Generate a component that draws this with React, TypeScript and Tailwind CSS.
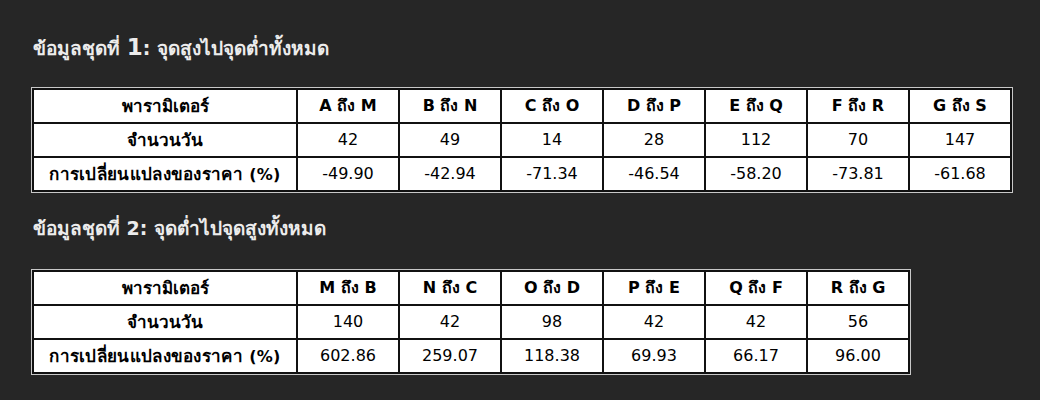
const font = { fontFamily: '"DejaVu Sans", "Noto Sans", sans-serif' };

type TableData = {
  headers: string[];
  days: string[];
  changes: string[];
};

const set1: TableData = {
  headers: ["A ถึง M", "B ถึง N", "C ถึง O", "D ถึง P", "E ถึง Q", "F ถึง R", "G ถึง S"],
  days: ["42", "49", "14", "28", "112", "70", "147"],
  changes: ["-49.90", "-42.94", "-71.34", "-46.54", "-58.20", "-73.81", "-61.68"],
};

const set2: TableData = {
  headers: ["M ถึง B", "N ถึง C", "O ถึง D", "P ถึง E", "Q ถึง F", "R ถึง G"],
  days: ["140", "42", "98", "42", "42", "56"],
  changes: ["602.86", "259.07", "118.38", "69.93", "66.17", "96.00"],
};

function DataTable({ data }: { data: TableData }) {
  const cell = "border-2 border-[#111] h-[34px] p-0 text-center align-middle leading-[20px]";
  return (
    <div className="w-fit border border-[#c8c8c8]">
      <table className="border-collapse bg-white text-[16px] text-black">
        <tbody>
          <tr>
            <th className={`${cell} w-[264px] font-bold text-[17px]`}>พารามิเตอร์</th>
            {data.headers.map((h) => (
              <th key={h} className={`${cell} w-[102px] font-bold`}>
                {h}
              </th>
            ))}
          </tr>
          <tr>
            <td className={`${cell} font-bold text-[17px]`}>จำนวนวัน</td>
            {data.days.map((d, i) => (
              <td key={i} className={cell}>
                {d}
              </td>
            ))}
          </tr>
          <tr>
            <td className={`${cell} font-bold text-[17px] tracking-[0.3px]`}>
              การเปลี่ยนแปลงของราคา <span className="text-[16px]">(%)</span>
            </td>
            {data.changes.map((c, i) => (
              <td key={i} className={cell}>
                {c}
              </td>
            ))}
          </tr>
        </tbody>
      </table>
    </div>
  );
}

export default function App() {
  return (
    <div className="w-[1040px] h-[400px] bg-[#262626] pl-[31px] pt-[32px]" style={font}>
      <h2 className="text-[19px] font-bold text-[#ececec] leading-[30px] mb-[24px] pl-[2px]">
        ข้อมูลชุดที่ <span className="text-[23px]">1</span>: จุดสูงไปจุดต่ำทั้งหมด
      </h2>
      <DataTable data={set1} />
      <h2 className="text-[19px] font-bold text-[#ececec] leading-[30px] mt-[20px] mb-[26px] pl-[2px]">
        ข้อมูลชุดที่ 2: จุดต่ำไปจุดสูงทั้งหมด
      </h2>
      <DataTable data={set2} />
    </div>
  );
}
